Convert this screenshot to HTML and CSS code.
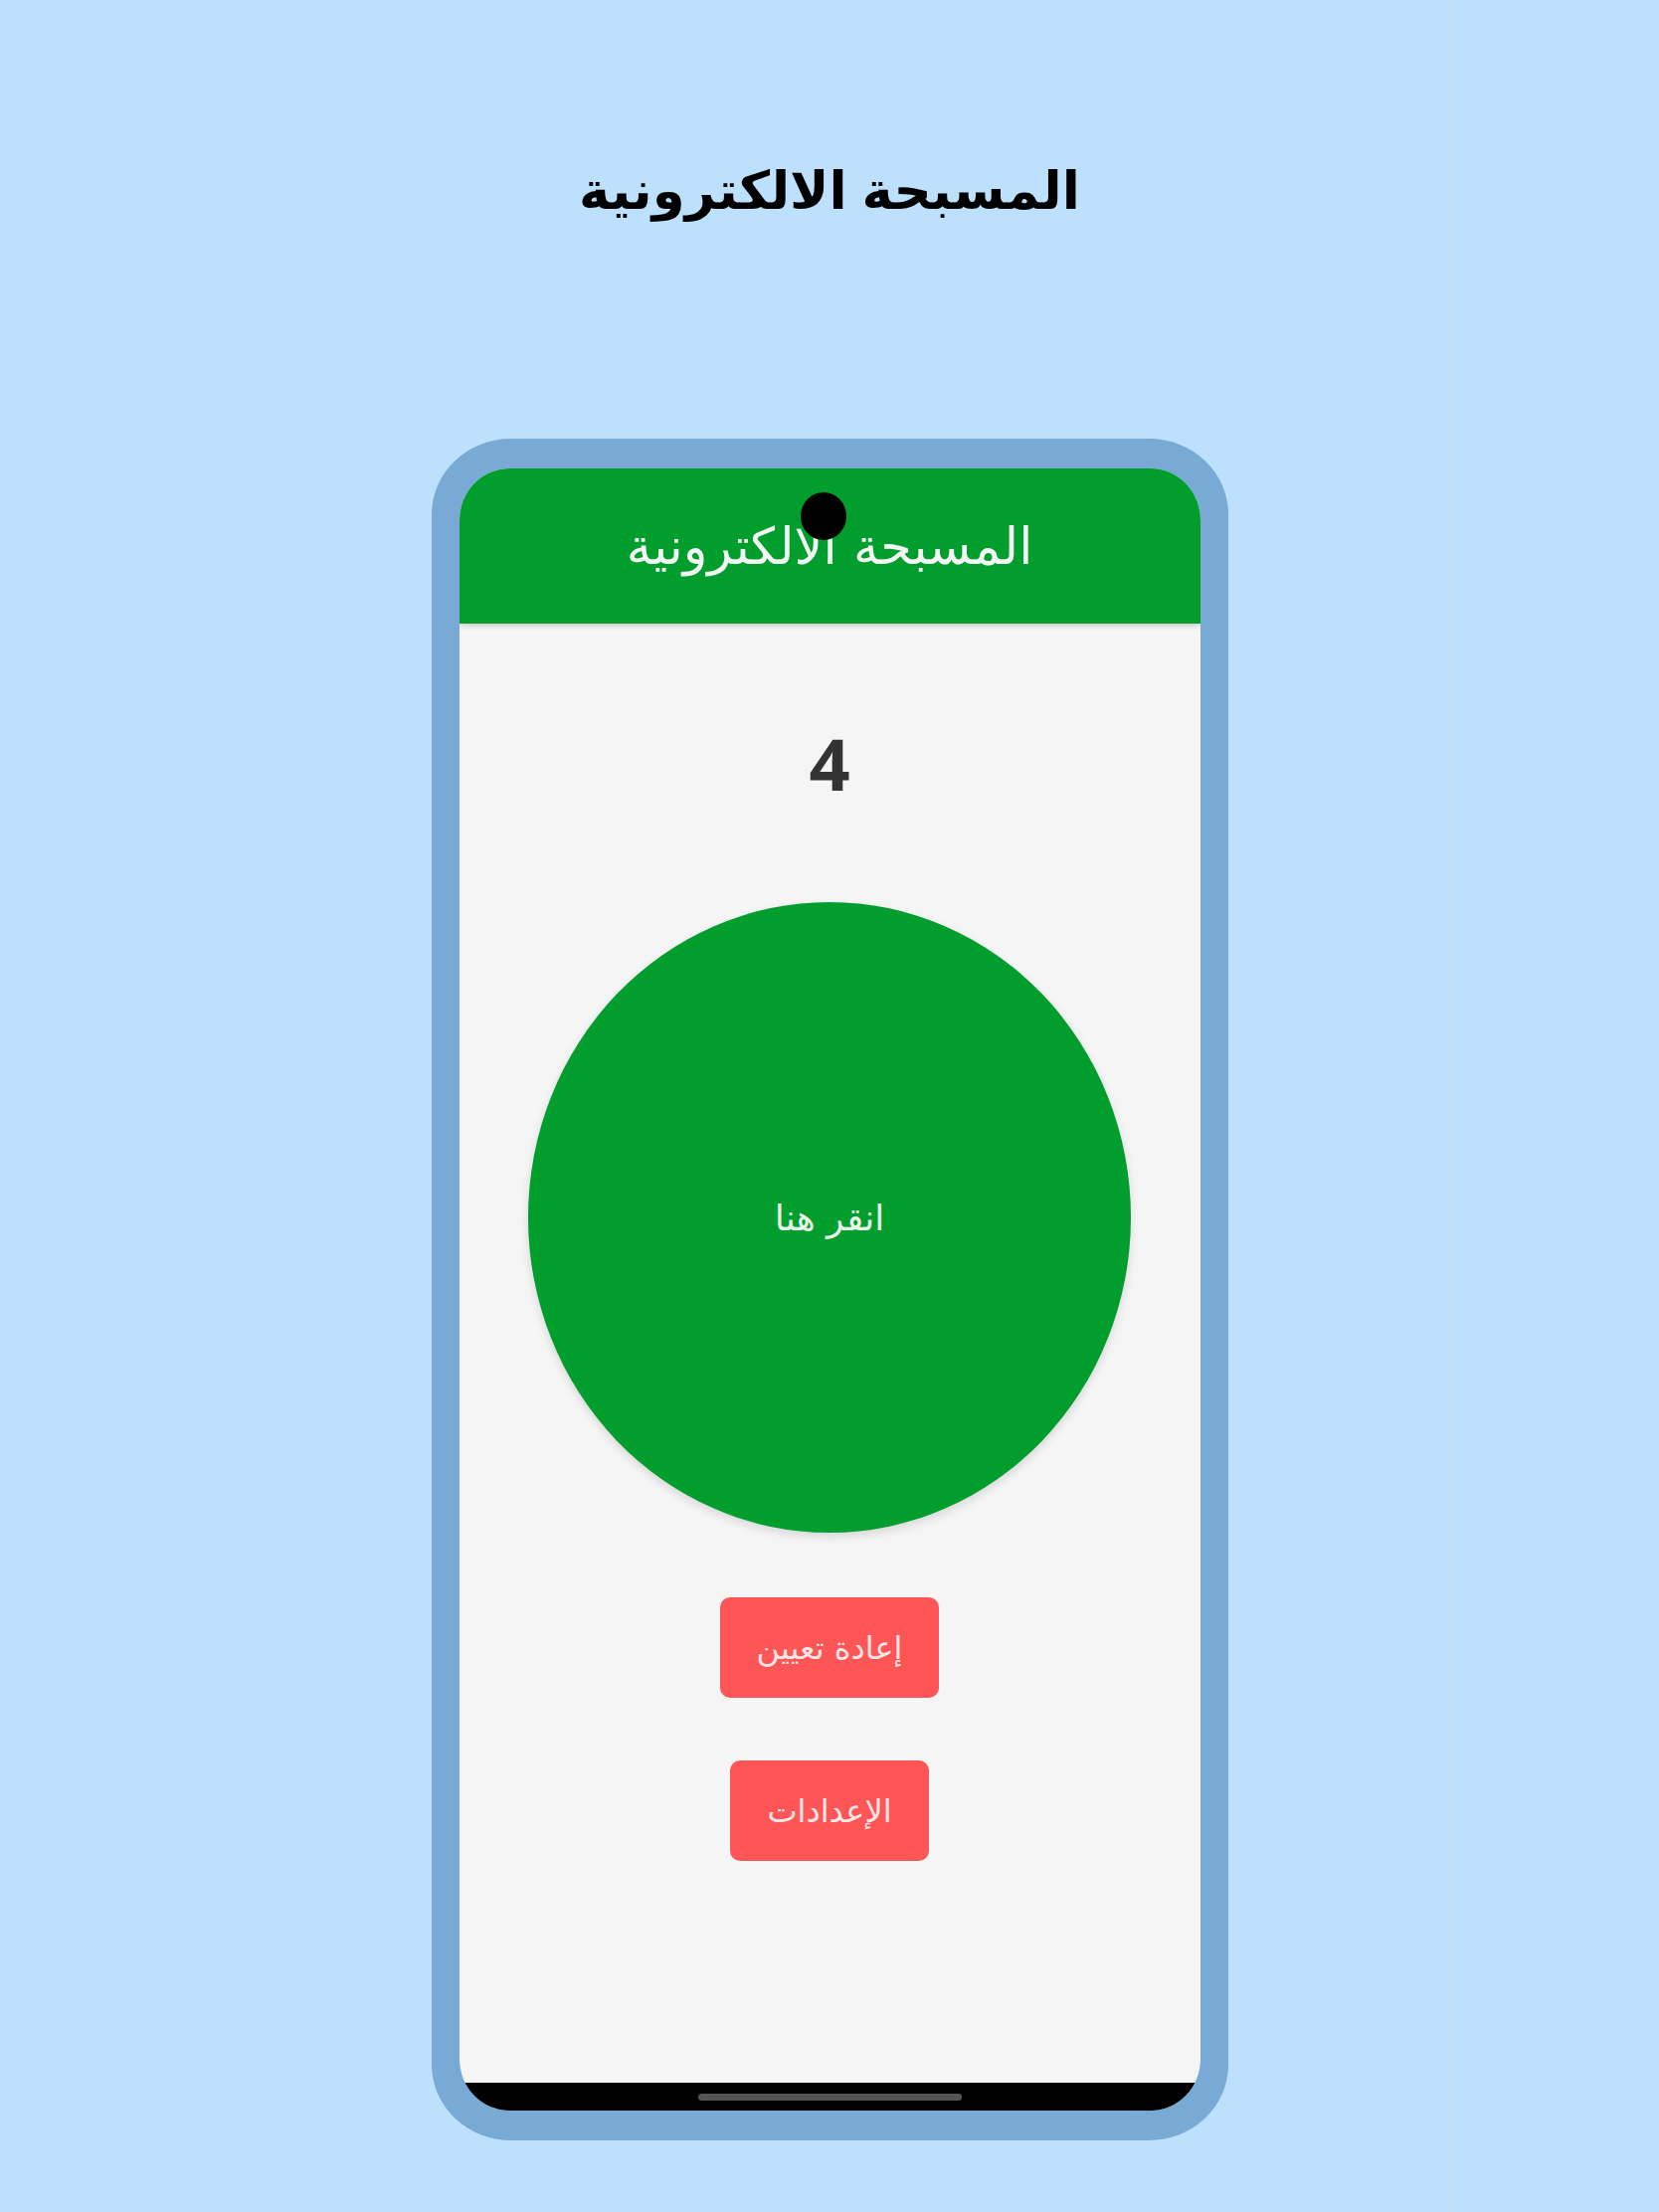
FILE: index.html
```html
<!DOCTYPE html>
<html lang="ar" dir="rtl">
<head>
<meta charset="utf-8">
<title>المسبحة الالكترونية</title>
<link rel="stylesheet" href="styles.css">
</head>
<body>
<main class="page">
  <h1 class="page-title">المسبحة الالكترونية</h1>
  <div class="phone">
    <div class="screen">
      <header class="app-bar">
        <span class="camera"></span>
        <h2 class="app-title">المسبحة الالكترونية</h2>
      </header>
      <section class="content">
        <div class="count">4</div>
        <button class="tap">انقر هنا</button>
        <button class="btn btn-reset">إعادة تعيين</button>
        <button class="btn btn-settings">الإعدادات</button>
      </section>
      <div class="nav-bar"><span class="home-indicator"></span></div>
    </div>
  </div>
</main>
</body>
</html>
```
FILE: styles.css
```css
html, body {
  margin: 0;
  padding: 0;
}
body {
  background:
    linear-gradient(to right, transparent 1457px, #c5def2 1457px, #c5def2 1460px, transparent 1460px),
    #bde0fd;
  min-height: 2224px;
  font-family: "DejaVu Sans", "Liberation Sans", sans-serif;
}
.page {
  display: flex;
  flex-direction: column;
  align-items: center;
}
.page-title {
  margin: 150px 0 0;
  height: 291px;
  font-family: "Liberation Sans", "DejaVu Sans", sans-serif;
  font-size: 53px;
  line-height: 84px;
  font-weight: bold;
  color: #000;
}
.phone {
  width: 801px;
  box-sizing: border-box;
  padding: 30px 28px;
  background: #79aad6;
  border-radius: 80px / 76px;
}
.screen {
  height: 1651px;
  display: flex;
  flex-direction: column;
  background: #f5f5f5;
  border-radius: 50px / 52px;
  overflow: hidden;
}
.app-bar {
  position: relative;
  height: 156px;
  flex: none;
  background: #019e2e;
  display: flex;
  align-items: center;
  justify-content: center;
  box-shadow: 0 2px 5px rgba(0,0,0,0.18);
  z-index: 1;
}
.camera {
  position: absolute;
  top: 24px;
  left: 343px;
  width: 46px;
  height: 48px;
  border-radius: 50%;
  background: #000;
}
.app-title {
  margin: 0;
  font-size: 51px;
  font-weight: normal;
  color: #f4f8f4;
}
.content {
  flex: 1;
  display: flex;
  flex-direction: column;
  align-items: center;
}
.count {
  margin-top: 104px;
  font-family: "Open Sans", sans-serif;
  font-weight: bold;
  font-size: 72px;
  line-height: 72px;
  color: #333;
}
.tap {
  margin-top: 104px;
  width: 606px;
  height: 634px;
  border: none;
  border-radius: 50%;
  background: #019e2e;
  color: #e9f3ea;
  font-family: "DejaVu Sans", sans-serif;
  font-size: 36px;
  box-shadow: 0 4px 10px rgba(0,0,0,0.12);
  padding: 0;
}
.btn {
  height: 101px;
  padding: 0 37px;
  border: none;
  border-radius: 10px;
  background: #fe5656;
  color: #f6e6e6;
  font-family: "DejaVu Sans", sans-serif;
  font-size: 32px;
}
.btn-reset {
  margin-top: 65px;
}
.btn-settings {
  margin-top: 63px;
}
.nav-bar {
  height: 28px;
  flex: none;
  background: #000;
  display: flex;
  align-items: center;
  justify-content: center;
}
.home-indicator {
  width: 265px;
  height: 7px;
  border-radius: 4px;
  background: #555;
}
```
